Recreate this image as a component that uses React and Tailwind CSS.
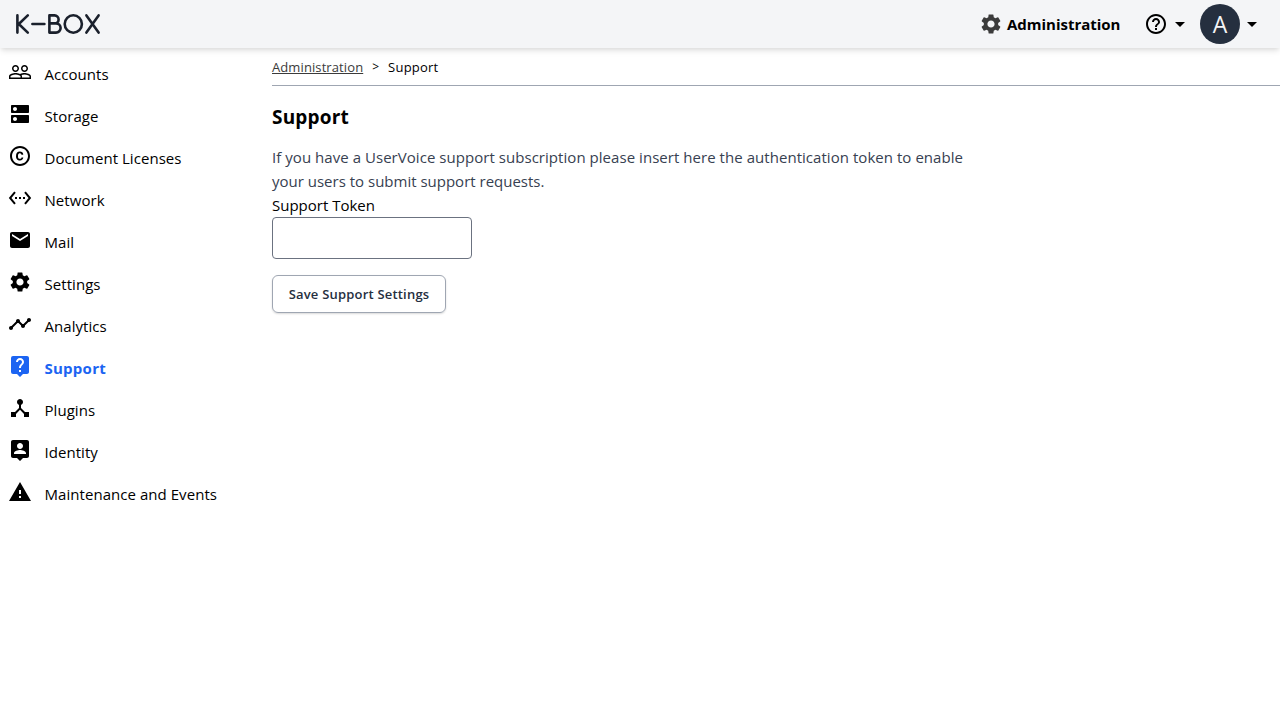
import {
  MdArrowDropDown,
  MdCopyright,
  MdDeviceHub,
  MdDns,
  MdHelpOutline,
  MdLiveHelp,
  MdMail,
  MdSettings,
  MdSettingsEthernet,
  MdTimeline,
  MdWarning,
} from 'react-icons/md';

function PeopleOutline({ className }) {
  return (
    <svg viewBox="0 0 24 24" fill="currentColor" className={className}>
      <path d="M16.5 13c-1.2 0-3.07.34-4.5 1-1.43-.67-3.3-1-4.5-1C5.33 13 1 14.08 1 16.25V19h22v-2.75c0-2.17-4.33-3.25-6.5-3.25zm-4 4.5h-10v-1.25c0-.54 2.56-1.75 5-1.75s5 1.21 5 1.75v1.25zm9 0H14v-1.25c0-.46-.2-.86-.52-1.22.88-.3 1.96-.53 3.02-.53 2.44 0 5 1.21 5 1.75v1.25zM7.5 12c1.93 0 3.5-1.57 3.5-3.5S9.43 5 7.5 5 4 6.57 4 8.5 5.57 12 7.5 12zm0-5.5c1.1 0 2 .9 2 2s-.9 2-2 2-2-.9-2-2 .9-2 2-2zm9 5.5c1.93 0 3.5-1.57 3.5-3.5S18.43 5 16.5 5 13 6.57 13 8.5s1.57 3.5 3.5 3.5zm0-5.5c1.1 0 2 .9 2 2s-.9 2-2 2-2-.9-2-2 .9-2 2-2z" />
    </svg>
  );
}

function PersonPin({ className }) {
  return (
    <svg viewBox="0 0 24 24" fill="currentColor" className={className}>
      <path d="M19 2H5c-1.11 0-2 .9-2 2v14c0 1.1.89 2 2 2h4l3 3 3-3h4c1.1 0 2-.9 2-2V4c0-1.1-.9-2-2-2zm-7 3c1.66 0 3 1.34 3 3s-1.34 3-3 3-3-1.34-3-3 1.34-3 3-3zm6 11H6v-.9c0-2 4-3.1 6-3.1s6 1.1 6 3.1v.9z" />
    </svg>
  );
}

const sections = [
  { label: 'Accounts', Icon: PeopleOutline },
  { label: 'Storage', Icon: MdDns },
  { label: 'Document Licenses', Icon: MdCopyright },
  { label: 'Network', Icon: MdSettingsEthernet },
  { label: 'Mail', Icon: MdMail },
  { label: 'Settings', Icon: MdSettings },
  { label: 'Analytics', Icon: MdTimeline },
  { label: 'Support', Icon: MdLiveHelp, active: true },
  { label: 'Plugins', Icon: MdDeviceHub },
  { label: 'Identity', Icon: PersonPin },
  { label: 'Maintenance and Events', Icon: MdWarning },
];

function Logo() {
  return (
    <svg
      viewBox="0 0 86 22"
      className="h-[22px] w-[86px]"
      fill="none"
      stroke="#1a202c"
      strokeWidth="2.6"
      strokeLinecap="round"
      strokeLinejoin="round"
      role="img"
      aria-label="K-Box"
    >
      <path d="M2.4 2.4v17.2M12.8 2.4 3.8 11l9 8.6M17.4 11h12" />
      <path d="M34.4 2.4v17.2h6.6a4.6 4.6 0 0 0 0-9.2h-6.6 5.2a4 4 0 0 0 0-8z" />
      <ellipse cx="58.3" cy="11" rx="8.6" ry="8.7" />
      <path d="M71.4 2.4 83.6 19.6M83.6 2.4 71.4 19.6" />
    </svg>
  );
}

function Header() {
  return (
    <header className="flex h-12 items-center justify-between bg-[#f4f5f7] pl-[15px] pr-4 shadow-[0_4px_6px_-1px_rgba(0,0,0,0.1),0_2px_4px_-1px_rgba(0,0,0,0.06)]">
      <Logo />
      <div className="flex items-center">
        <a className="flex items-center">
          <MdSettings className="size-6 text-[#3b3b3b]" />
          <span className="ml-1 w-[113px] whitespace-nowrap text-[15px] font-bold tracking-[-0.02px]">Administration</span>
        </a>
        <button className="ml-6 flex items-center">
          <MdHelpOutline className="size-6" />
          <MdArrowDropDown className="size-6" />
        </button>
        <button className="ml-2 flex items-center">
          <span className="flex size-10 items-center justify-center rounded-full bg-[#252f3f] text-[23px] leading-none text-gray-100">
            A
          </span>
          <MdArrowDropDown className="size-6" />
        </button>
      </div>
    </header>
  );
}

function Sidebar() {
  return (
    <nav className="w-64 shrink-0 pt-[5px]">
      {sections.map(({ label, Icon, active }) => (
        <a
          key={label}
          className={
            active
              ? 'flex h-[42px] items-center px-2 font-bold tracking-[0.25px] text-[#1c64f2]'
              : 'flex h-[42px] items-center px-2 tracking-[0.05px]'
          }
        >
          <Icon className="mb-1 mr-3 size-6 shrink-0" />
          <span className="whitespace-nowrap pl-[0.5px] text-[15px]">{label}</span>
        </a>
      ))}
    </nav>
  );
}

export default function App() {
  return (
    <div className="flex h-screen flex-col overflow-hidden bg-white font-['Open_Sans','Noto_Sans',sans-serif] text-[15px] leading-6 text-black">
      <Header />
      <div className="flex flex-1">
        <Sidebar />
        <main className="flex-1 pl-4">
          <div className="flex h-[38px] items-center border-b border-[#9fa6b2] text-[13px]">
            <a className="tracking-[0.1px] text-[#3b3b3b] underline">Administration</a>
            <span className="mx-[9px] text-xs">&gt;</span>
            <span className="tracking-[0.22px]">Support</span>
          </div>
          <h4 className="mt-[17px] text-[19px] font-bold leading-7 tracking-[0.2px]">Support</h4>
          <p className="mt-[14px] whitespace-nowrap text-[#374151]">
            <span className="tracking-[0.045px]">
              If you have a UserVoice support subscription please insert here the authentication token to enable
            </span>
            <br />
            your users to submit support requests.
          </p>
          <label htmlFor="token" className="block">
            Support Token
          </label>
          <input
            id="token"
            type="text"
            className="block h-[42px] w-[200px] rounded border border-[#6b7280] px-3"
          />
          <button className="mt-4 flex h-[38px] w-[174px] items-center justify-center whitespace-nowrap rounded-md border border-[#9fa6b2] text-[13px] font-semibold tracking-[0.2px] text-[#252f3f] shadow-[0_1px_2px_rgba(0,0,0,0.15)]">
            Save Support Settings
          </button>
        </main>
      </div>
    </div>
  );
}
